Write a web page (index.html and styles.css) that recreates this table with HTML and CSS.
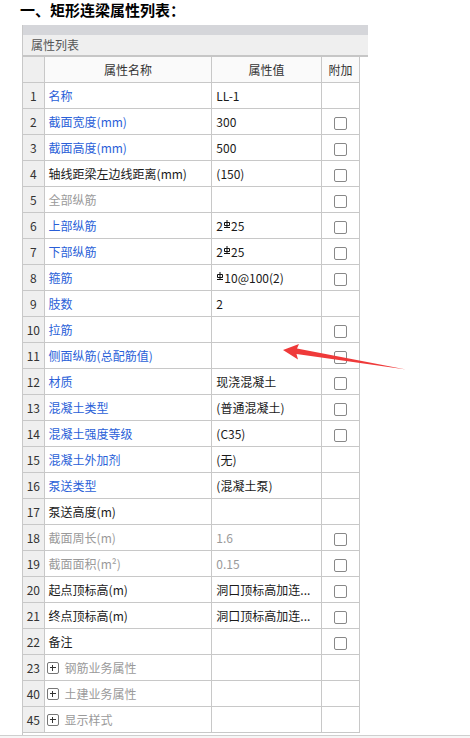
FILE: index.html
```html
<!DOCTYPE html>
<html lang="zh-CN">
<head>
<meta charset="utf-8">
<title>矩形连梁属性列表</title>
<link rel="stylesheet" href="styles.css">
</head>
<body>
<h1 class="title">一、矩形连梁属性列表：</h1>

<div class="panel">
  <div class="panel-top"></div>
  <div class="panel-head">属性列表</div>
  <table class="props">
    <colgroup>
      <col class="c-num"><col class="c-name"><col class="c-val"><col class="c-add">
    </colgroup>
    <tr class="head">
      <th class="num"></th><th>属性名称</th><th>属性值</th><th>附加</th>
    </tr>
    <tr><td class="num">1</td><td class="blue">名称</td><td>LL-1</td><td></td></tr>
    <tr><td class="num">2</td><td class="blue">截面宽度(mm)</td><td>300</td><td><span class="check"></span></td></tr>
    <tr><td class="num">3</td><td class="blue">截面高度(mm)</td><td>500</td><td><span class="check"></span></td></tr>
    <tr><td class="num">4</td><td>轴线距梁左边线距离(mm)</td><td>(150)</td><td><span class="check"></span></td></tr>
    <tr><td class="num">5</td><td class="gray">全部纵筋</td><td></td><td><span class="check"></span></td></tr>
    <tr><td class="num">6</td><td class="blue">上部纵筋</td><td>2<svg class="bar" viewBox="0 0 6 8"><path d="M0.5 2.5h5v3h-5zM3 0v7.5M0 7.5h6"/></svg>25</td><td><span class="check"></span></td></tr>
    <tr><td class="num">7</td><td class="blue">下部纵筋</td><td>2<svg class="bar" viewBox="0 0 6 8"><path d="M0.5 2.5h5v3h-5zM3 0v7.5M0 7.5h6"/></svg>25</td><td><span class="check"></span></td></tr>
    <tr><td class="num">8</td><td class="blue">箍筋</td><td><svg class="bar" viewBox="0 0 6 8"><path d="M0.5 2.5h5v3h-5zM3 0v7.5M0 7.5h6"/></svg>10@100(2)</td><td><span class="check"></span></td></tr>
    <tr><td class="num">9</td><td class="blue">肢数</td><td>2</td><td></td></tr>
    <tr><td class="num">10</td><td class="blue">拉筋</td><td></td><td><span class="check"></span></td></tr>
    <tr><td class="num">11</td><td class="blue">侧面纵筋(总配筋值)</td><td></td><td><span class="check"></span></td></tr>
    <tr><td class="num">12</td><td class="blue">材质</td><td>现浇混凝土</td><td><span class="check"></span></td></tr>
    <tr><td class="num">13</td><td class="blue">混凝土类型</td><td>(普通混凝土)</td><td><span class="check"></span></td></tr>
    <tr><td class="num">14</td><td class="blue">混凝土强度等级</td><td>(C35)</td><td><span class="check"></span></td></tr>
    <tr><td class="num">15</td><td class="blue">混凝土外加剂</td><td>(无)</td><td></td></tr>
    <tr><td class="num">16</td><td class="blue">泵送类型</td><td>(混凝土泵)</td><td></td></tr>
    <tr><td class="num">17</td><td>泵送高度(m)</td><td></td><td></td></tr>
    <tr><td class="num">18</td><td class="gray">截面周长(m)</td><td class="gray">1.6</td><td><span class="check"></span></td></tr>
    <tr><td class="num">19</td><td class="gray">截面面积(m²)</td><td class="gray">0.15</td><td><span class="check"></span></td></tr>
    <tr><td class="num">20</td><td>起点顶标高(m)</td><td>洞口顶标高加连...</td><td><span class="check"></span></td></tr>
    <tr><td class="num">21</td><td>终点顶标高(m)</td><td>洞口顶标高加连...</td><td><span class="check"></span></td></tr>
    <tr><td class="num">22</td><td>备注</td><td></td><td><span class="check"></span></td></tr>
    <tr><td class="num">23</td><td class="group"><span class="plus"></span>钢筋业务属性</td><td></td><td></td></tr>
    <tr><td class="num">40</td><td class="group"><span class="plus"></span>土建业务属性</td><td></td><td></td></tr>
    <tr><td class="num">45</td><td class="group"><span class="plus"></span>显示样式</td><td></td><td></td></tr>
  </table>
</div>
<div class="page-foot"></div>

<svg class="arrow" width="130" height="30" viewBox="280 342 130 30">
  <polygon points="283,350 299,344 297,348.6 406,369.5 296.5,354 298,359.5"/>
</svg>
</body>
</html>
```

FILE: styles.css
```css
body {
  margin: 0;
  font-family: "Noto Sans CJK SC", "Noto Sans", sans-serif;
  font-size: 12px;
  color: #1a1a1a;
  background: #fff;
  position: relative;
  height: 738px;
  overflow: hidden;
}
.title {
  margin: 0;
  padding: 0 0 0 20px;
  height: 25px;
  font-size: 15px;
  font-weight: bold;
  line-height: 20px;
  color: #000;
}
.panel {
  margin-left: 22px;
  width: 346px;
  height: 710px;
  overflow: hidden;
  border-left: 1px solid #c8c8c8;
  box-sizing: border-box;
}
.panel-top {
  height: 10px;
  background: #d5d6da;
}
.panel-head {
  height: 20px;
  line-height: 20px;
  padding-left: 8px;
  background: #efefef;
  color: #555;
  border-bottom: 2px solid #c6c6c6;
}
.props {
  border-collapse: collapse;
  table-layout: fixed;
  width: 337px;
  background: #fff;
}
.c-num { width: 21px; }
.c-name { width: 167px; }
.c-val { width: 109px; }
.c-add { width: 38px; }
.props tr {
  height: 26px;
}
.props td,
.props th {
  border: 1px solid #c8c8c8;
  padding: 0 0 0 4px;
  white-space: nowrap;
  overflow: hidden;
  font-weight: normal;
}
.props tr.head {
  height: 25px;
}
.props th {
  border-top: none;
  text-align: center;
  color: #333;
  padding: 0;
  background: #fafafa;
}
.props td:first-child,
.props th:first-child {
  border-left: none;
}
.props .num {
  background: #efefef;
  color: #333;
  text-align: center;
  padding: 0;
}
.props th.num {
  border-right: none;
}
.props td:last-child {
  text-align: center;
  padding: 0;
}
.blue { color: #2a5fd8; }
.gray { color: #9a9a9a; }
.group { color: #9a9a9a; padding-left: 2px !important; }

.check {
  display: inline-block;
  width: 11px;
  height: 11px;
  border: 1px solid #888;
  border-radius: 2px;
  vertical-align: middle;
  background: #fff;
}
.plus {
  display: inline-block;
  position: relative;
  width: 10px;
  height: 10px;
  border: 1px solid #777;
  border-radius: 2px;
  margin-right: 6px;
  vertical-align: -1px;
}
.plus::before,
.plus::after {
  content: "";
  position: absolute;
  background: #333;
}
.plus::before {
  left: 2px;
  top: 4.5px;
  width: 6px;
  height: 1px;
}
.plus::after {
  left: 4.5px;
  top: 2px;
  width: 1px;
  height: 6px;
}
.bar {
  width: 6px;
  height: 8px;
  margin: 0 1px;
  vertical-align: 3px;
  fill: none;
  stroke: #111;
  stroke-width: 1;
}
.page-foot {
  margin-top: 0;
  border-top: 1px solid #cfcfcf;
  height: 3px;
  background: #f6f6f6;
}
.arrow {
  position: absolute;
  left: 280px;
  top: 342px;
  fill: #ef3a3a;
}
```
